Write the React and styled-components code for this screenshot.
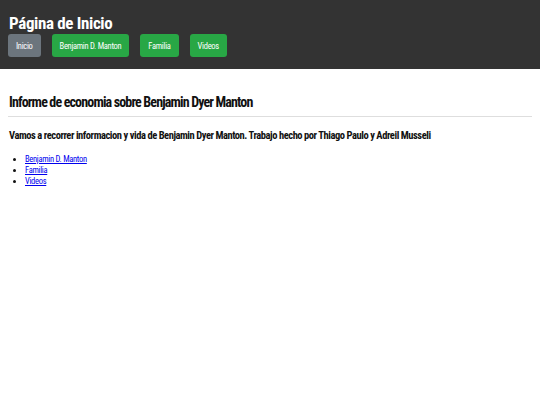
import React from "react";
import styled, { createGlobalStyle } from "styled-components";

const NAV = [
  { label: "Inicio", active: true },
  { label: "Benjamin D. Manton" },
  { label: "Familia" },
  { label: "Videos" },
];

const LINKS = ["Benjamin D. Manton", "Familia", "Videos"];

const Global = createGlobalStyle`
  body {
    margin: 0;
    background: #fff;
    color: #111;
    font-family: "Roboto Condensed", Roboto, "Liberation Sans", sans-serif;
    font-stretch: condensed;
  }
`;

const Header = styled.header`
  background: #333;
  color: #fff;
  padding: 13px 8px 12px;
`;

const Title = styled.h1`
  margin: 0 0 1px 1px;
  font-size: 17px;
  line-height: 20px;
  font-weight: bold;
  letter-spacing: -0.35px;
`;

const Nav = styled.nav`
  display: flex;
  gap: 11px;
`;

const NavButton = styled.a`
  display: flex;
  align-items: center;
  height: 23px;
  padding: 0 8px;
  border-radius: 3px;
  font-size: 8.5px;
  letter-spacing: -0.3px;
  color: #fff;
  text-decoration: none;
  background: ${(p) => (p.$active ? "#6c757d" : "#28a745")};
`;

const Main = styled.main`
  padding: 24px 8px;
`;

const Heading = styled.h2`
  margin: 0;
  padding: 0 0 5px 1px;
  font-size: 14px;
  line-height: 18px;
  letter-spacing: -0.85px;
  border-bottom: 1px solid #dedede;
`;

const Intro = styled.p`
  margin: 12px 0 12px 1px;
  font-size: 10.5px;
  line-height: 13px;
  font-weight: bold;
  letter-spacing: -0.45px;
`;

const List = styled.ul`
  margin: 0;
  padding-left: 17px;
  font-size: 8.5px;
  line-height: 11px;
  letter-spacing: -0.3px;
  a {
    color: #0000ee;
  }
`;

export default function App() {
  return (
    <>
      <Global />
      <Header>
        <Title>Página de Inicio</Title>
        <Nav>
          {NAV.map((n) => (
            <NavButton key={n.label} href="#" $active={n.active}>
              {n.label}
            </NavButton>
          ))}
        </Nav>
      </Header>
      <Main>
        <Heading>Informe de economia sobre Benjamin Dyer Manton</Heading>
        <Intro>
          Vamos a recorrer informacion y vida de Benjamin Dyer Manton. Trabajo
          hecho por Thiago Paulo y Adreil Musseli
        </Intro>
        <List>
          {LINKS.map((l) => (
            <li key={l}>
              <a href="#">{l}</a>
            </li>
          ))}
        </List>
      </Main>
    </>
  );
}
